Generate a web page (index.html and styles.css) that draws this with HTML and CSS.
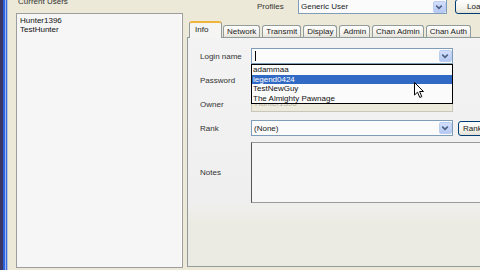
FILE: index.html
```html
<!DOCTYPE html>
<html>
<head>
<meta charset="utf-8">
<link rel="stylesheet" href="styles.css">
</head>
<body>
<div class="app">
  <div class="frame"></div>
  <div class="left">
    <div class="caption">Current Users</div>
    <div class="listbox">
      <div class="item">Hunter1396</div>
      <div class="item">TestHunter</div>
    </div>
  </div>
  <div class="right">
    <div class="profiles">
      <span class="plabel">Profiles</span>
      <div class="combo pcombo">
        <span class="ctext">Generic User</span>
        <span class="arrow"><svg width="13" height="12" viewBox="0 0 13 12"><polyline points="3.5,4.5 6.5,7.5 9.5,4.5" fill="none" stroke="#4d6185" stroke-width="1.7"/></svg></span>
      </div>
      <div class="btn pbtn">Load</div>
    </div>
    <div class="tabctl">
      <div class="tabs">
        <div class="tab active">Info</div>
        <div class="tab">Network</div>
        <div class="tab">Transmit</div>
        <div class="tab">Display</div>
        <div class="tab">Admin</div>
        <div class="tab">Chan Admin</div>
        <div class="tab">Chan Auth</div>
      </div>
      <div class="panel">
        <div class="row">
          <span class="label">Login name</span>
          <div class="combo wide">
            <span class="caret"></span>
            <span class="arrow"><svg width="13" height="12" viewBox="0 0 13 12"><polyline points="3.5,4.5 6.5,7.5 9.5,4.5" fill="none" stroke="#4d6185" stroke-width="1.7"/></svg></span>
            <div class="dropdown">
              <div class="opt">adammaa</div>
              <div class="opt sel">legend0424</div>
              <div class="opt">TestNewGuy</div>
              <div class="opt">The Almighty Pawnage</div>
            </div>
          </div>
        </div>
        <div class="row">
          <span class="label">Password</span>
          <div class="field wide"></div>
        </div>
        <div class="row">
          <span class="label">Owner</span>
          <div class="field wide disabled">Hunter1396</div>
        </div>
        <div class="row">
          <span class="label">Rank</span>
          <div class="combo wide">
            <span class="ctext">(None)</span>
            <span class="arrow"><svg width="13" height="12" viewBox="0 0 13 12"><polyline points="3.5,4.5 6.5,7.5 9.5,4.5" fill="none" stroke="#4d6185" stroke-width="1.7"/></svg></span>
          </div>
          <div class="btn rbtn">Ranks...</div>
        </div>
        <div class="row notesrow">
          <span class="label">Notes</span>
          <div class="notes"></div>
        </div>
      </div>
    </div>
  </div>
  <svg class="cursor" width="11" height="17" viewBox="0 0 11 17"><polygon points="0.5,0.5 0.5,13 3.5,10.2 5.8,15.5 7.8,14.6 5.6,9.5 9.5,9.5" fill="#fff" stroke="#000" stroke-width="1" stroke-linejoin="round"/></svg>
</div>
</body>
</html>
```

FILE: styles.css
```css
html, body {
  margin: 0;
  padding: 0;
}
body {
  width: 480px;
  height: 270px;
  overflow: hidden;
  background: #ece9d8;
  font-family: "Liberation Sans", Arial, sans-serif;
  font-size: 8px;
  color: #222;
}
.app {
  position: relative;
  display: flex;
  width: 480px;
  height: 270px;
  overflow: hidden;
  background: #ece9d8;
}
.frame {
  flex: none;
  width: 8px;
  height: 270px;
  background: linear-gradient(to right, #3b3866 0, #3b3866 3px, #2d62de 3px, #2d62de 5px, #9fb9ee 5px, #9fb9ee 6px, #3a6ae0 6px, #3a6ae0 7px, #b8c4dc 7px);
}
.left {
  flex: none;
  width: 170px;
  padding-left: 8px;
  display: flex;
  flex-direction: column;
}
.caption {
  height: 13px;
  line-height: 8px;
  margin-top: -2px;
  padding-left: 2px;
  color: #333;
}
.listbox {
  width: 167px;
  height: 255px;
  box-sizing: border-box;
  margin-top: 2px;
  border: 1px solid #9d9d9d;
  background: #f6f6f6;
  padding: 2px 0 0 3px;
  box-shadow: inset -1px 0 0 #fff;
}
.item {
  line-height: 9px;
  color: #111;
}
.right {
  flex: none;
  width: 294px;
  display: flex;
  flex-direction: column;
}
.profiles {
  height: 15px;
  margin-top: -1px;
  display: flex;
  align-items: center;
}
.plabel {
  flex: none;
  margin-left: 71px;
  width: 41px;
  color: #333;
}
.combo {
  position: relative;
  height: 16px;
  box-sizing: border-box;
  border: 1px solid #7f9db9;
  background: #fbfbfb;
  display: flex;
  align-items: center;
}
.pcombo {
  flex: none;
  width: 149px;
  height: 15px;
}
.ctext {
  padding-left: 2px;
  color: #222;
}
.arrow {
  margin-left: auto;
  margin-right: 0;
  width: 13px;
  height: 12px;
  box-sizing: border-box;
  border: 1px solid #bccdf3;
  border-radius: 2px;
  background: linear-gradient(#d3defb, #b6c9f3);
  display: flex;
}
.arrow svg {
  margin: -1px 0 0 -1px;
}
.btn {
  height: 15px;
  box-sizing: border-box;
  border: 1px solid #003c74;
  border-radius: 3px;
  background: linear-gradient(#ffffff, #f0efe7 70%, #e3e1d6);
  line-height: 13px;
  padding-left: 6px;
  color: #222;
  flex: none;
  white-space: nowrap;
}
.pbtn {
  width: 50px;
  margin-left: 8px;
  padding-left: 11px;
}
.rbtn {
  width: 44px;
  margin-left: 5px;
  padding-left: 4px;
}
.tabctl {
  margin-left: 1px;
  margin-top: 7px;
  display: flex;
  flex-direction: column;
}
.tabs {
  height: 17px;
  display: flex;
  align-items: flex-end;
  padding-left: 2px;
  margin-bottom: -1px;
  position: relative;
  z-index: 1;
}
.tab {
  height: 12px;
  box-sizing: border-box;
  border: 1px solid #919b9c;
  border-bottom: none;
  border-radius: 3px 3px 0 0;
  background: linear-gradient(#fefefe, #f4f3ee 60%, #e4e2d8);
  padding: 0 3px;
  margin-right: 2px;
  margin-bottom: 1px;
  line-height: 11px;
  color: #222;
  white-space: nowrap;
}
.tab.active {
  height: 17px;
  width: 33px;
  margin-bottom: 0;
  margin-right: 1px;
  padding-left: 5px;
  border-top: 2px solid #f2b53c;
  background: #f5f5f3;
  line-height: 13px;
}
.panel {
  height: 230px;
  box-sizing: border-box;
  border: 1px solid #919b9c;
  border-right: none;
  background: linear-gradient(#f3f3f3 0, #efefef 165px, #ecebe3 185px, #ecebe3);
  padding: 10px 0 0 12px;
}
.row {
  display: flex;
  align-items: center;
  height: 16px;
  margin-bottom: 8px;
}
.label {
  flex: none;
  width: 51px;
  color: #333;
}
.wide {
  width: 202px;
  flex: none;
}
.field {
  height: 16px;
  box-sizing: border-box;
  border: 1px solid #7f9db9;
  background: #fbfbfb;
  padding-left: 3px;
  line-height: 14px;
}
.field.disabled {
  background: #ebeadb;
  border-color: #c9c7ba;
  color: #b4b1a2;
}
.caret {
  width: 1px;
  height: 10px;
  margin-left: 3px;
  background: #000;
}
.dropdown {
  position: absolute;
  left: -1px;
  top: 15px;
  width: 202px;
  box-sizing: border-box;
  border: 1px solid #000;
  background: #fbfbfb;
  z-index: 3;
}
.opt {
  height: 9.5px;
  line-height: 9.5px;
  padding-left: 1px;
  color: #111;
  white-space: nowrap;
}
.opt.sel {
  background: #316ac5;
  color: #fff;
}
.notesrow {
  height: 61px;
  margin-top: -2px;
}
.notes {
  flex: none;
  width: 240px;
  height: 61px;
  box-sizing: border-box;
  border: 1px solid #9a9a9a;
  border-left-color: #555;
  background: #f6f6f6;
}
.cursor {
  position: absolute;
  left: 414px;
  top: 82px;
  z-index: 5;
}
```
